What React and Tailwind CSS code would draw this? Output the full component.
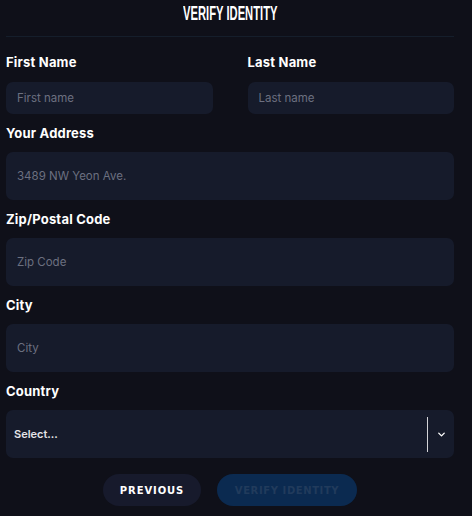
import { ChevronDown } from 'lucide-react';

const labelCls = "block text-[13px] leading-[20px] font-bold text-white tracking-[0.2px]";
const inputCls =
  "w-full rounded-[7px] bg-[#161b2b] px-[11px] text-[11.5px] text-white placeholder-[#6c7080] outline-none";

const Field = ({ label, placeholder }) => (
  <div>
    <label className={labelCls}>{label}</label>
    <input placeholder={placeholder} className={`${inputCls} mt-[9px] h-[48px]`} />
  </div>
);

export default function App() {
  return (
    <div
      className="w-[472px] h-[516px] overflow-hidden bg-[#0f1019] pl-[6px] pr-[18px]"
      style={{ fontFamily: 'Inter, "Noto Sans", sans-serif' }}
    >
      {/* header */}
      <div className="h-[37px] border-b border-[#151e2b] flex justify-center">
        <h1
          className="inline-block text-[20px] leading-[26px] font-bold text-white scale-x-[0.56]"
          style={{ fontFamily: '"Liberation Sans", Arial, sans-serif' }}
        >
          VERIFY IDENTITY
        </h1>
      </div>

      <div className="mt-[15px] flex flex-col gap-[9px]">
        <div className="grid grid-cols-2 gap-[35px]">
          <div>
            <label className={labelCls}>First Name</label>
            <input placeholder="First name" className={`${inputCls} mt-[10px] h-[32px]`} />
          </div>
          <div>
            <label className={labelCls}>Last Name</label>
            <input placeholder="Last name" className={`${inputCls} mt-[10px] h-[32px]`} />
          </div>
        </div>

        <Field label="Your Address" placeholder="3489 NW Yeon Ave." />
        <Field label="Zip/Postal Code" placeholder="Zip Code" />
        <Field label="City" placeholder="City" />

        <div>
          <label className={labelCls}>Country</label>
          <div className="mt-[9px] h-[48px] rounded-[7px] bg-[#161b2b] flex items-center pl-[8px]">
            <span className="flex-1 text-[11px] font-semibold text-[#e4e4e8]">Select...</span>
            <span className="w-px h-[35px] bg-[#d4d4d8]" />
            <span className="w-[26px] flex justify-center text-white">
              <ChevronDown size={11} strokeWidth={3} />
            </span>
          </div>
        </div>
      </div>

      <div
        className="mt-[16px] flex justify-center gap-[16px]"
        style={{ fontFamily: '"DejaVu Sans", sans-serif' }}
      >
        <button className="h-[32px] w-[98px] rounded-full bg-[#171a2c] text-[10px] font-extrabold text-white tracking-[0.9px]">
          PREVIOUS
        </button>
        <button
          disabled
          className="h-[32px] w-[140px] rounded-full bg-[#0b2a50] text-[10px] font-extrabold text-[#213b5c] tracking-[0.6px]"
        >
          VERIFY IDENTITY
        </button>
      </div>
    </div>
  );
}
